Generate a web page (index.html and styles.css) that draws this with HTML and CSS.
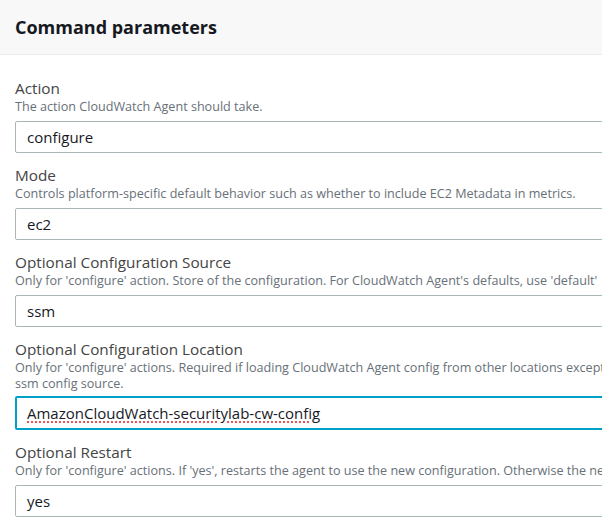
FILE: index.html
```html
<!DOCTYPE html>
<html lang="en">
<head>
<meta charset="utf-8">
<title>Command parameters</title>
<link rel="stylesheet" href="styles.css">
</head>
<body>
<div class="panel">
  <div class="panel-header">
    <h2 class="panel-title">Command parameters</h2>
  </div>
  <div class="panel-body">
    <div class="field">
      <div class="field-label">Action</div>
      <div class="field-desc">The action CloudWatch Agent should take.</div>
      <div class="field-input">configure</div>
    </div>
    <div class="field">
      <div class="field-label">Mode</div>
      <div class="field-desc">Controls platform-specific default behavior such as whether to include EC2 Metadata in metrics.</div>
      <div class="field-input">ec2</div>
    </div>
    <div class="field">
      <div class="field-label">Optional Configuration Source</div>
      <div class="field-desc">Only for 'configure' action. Store of the configuration. For CloudWatch Agent's defaults, use 'default'</div>
      <div class="field-input">ssm</div>
    </div>
    <div class="field">
      <div class="field-label">Optional Configuration Location</div>
      <div class="field-desc">Only for 'configure' actions. Required if loading CloudWatch Agent config from other locations except<br>ssm config source.</div>
      <div class="field-input is-focused"><span class="misspelled">AmazonCloudWatch-securitylab-cw-config</span></div>
    </div>
    <div class="field">
      <div class="field-label">Optional Restart</div>
      <div class="field-desc">Only for 'configure' actions. If 'yes', restarts the agent to use the new configuration. Otherwise the new configuration will only apply on the next restart.</div>
      <div class="field-input">yes</div>
    </div>
  </div>
</div>
</body>
</html>
```
FILE: styles.css
```css
html, body {
  margin: 0;
  padding: 0;
  background: #ffffff;
  overflow: hidden;
}

body {
  font-family: "Open Sans", "Noto Sans", sans-serif;
  color: #16191f;
}

.panel {
  width: 602px;
  overflow: hidden;
}

.panel-header {
  height: 54px;
  background: #f8f8f8;
  border-bottom: 1px solid #eaeded;
  display: flex;
  align-items: center;
  padding-left: 15px;
}

.panel-title {
  margin: 0;
  font-size: 18px;
  font-weight: 700;
  color: #16191f;
}

.panel-body {
  padding: 22px 0 0 15px;
  display: flex;
  flex-direction: column;
  gap: 11px;
}

.field {
  display: flex;
  flex-direction: column;
}

.field-label {
  font-size: 15.3px;
  line-height: 22px;
  color: #444444;
}

.field-desc {
  font-size: 12.6px;
  line-height: 16px;
  color: #687078;
  white-space: nowrap;
}

.field-input {
  margin-top: 6px;
  width: 640px;
  height: 32px;
  box-sizing: border-box;
  border: 1px solid #aab7b8;
  border-radius: 2px;
  padding: 0 11px;
  display: flex;
  align-items: center;
  font-size: 15px;
  color: #16191f;
  white-space: nowrap;
}

.field-input.is-focused {
  margin-top: 4px;
  height: 34px;
  border: 2px solid #00a1c9;
  padding: 0 10px;
}

.misspelled {
  text-decoration: underline dotted #e02020;
  text-underline-offset: 3px;
}
```
